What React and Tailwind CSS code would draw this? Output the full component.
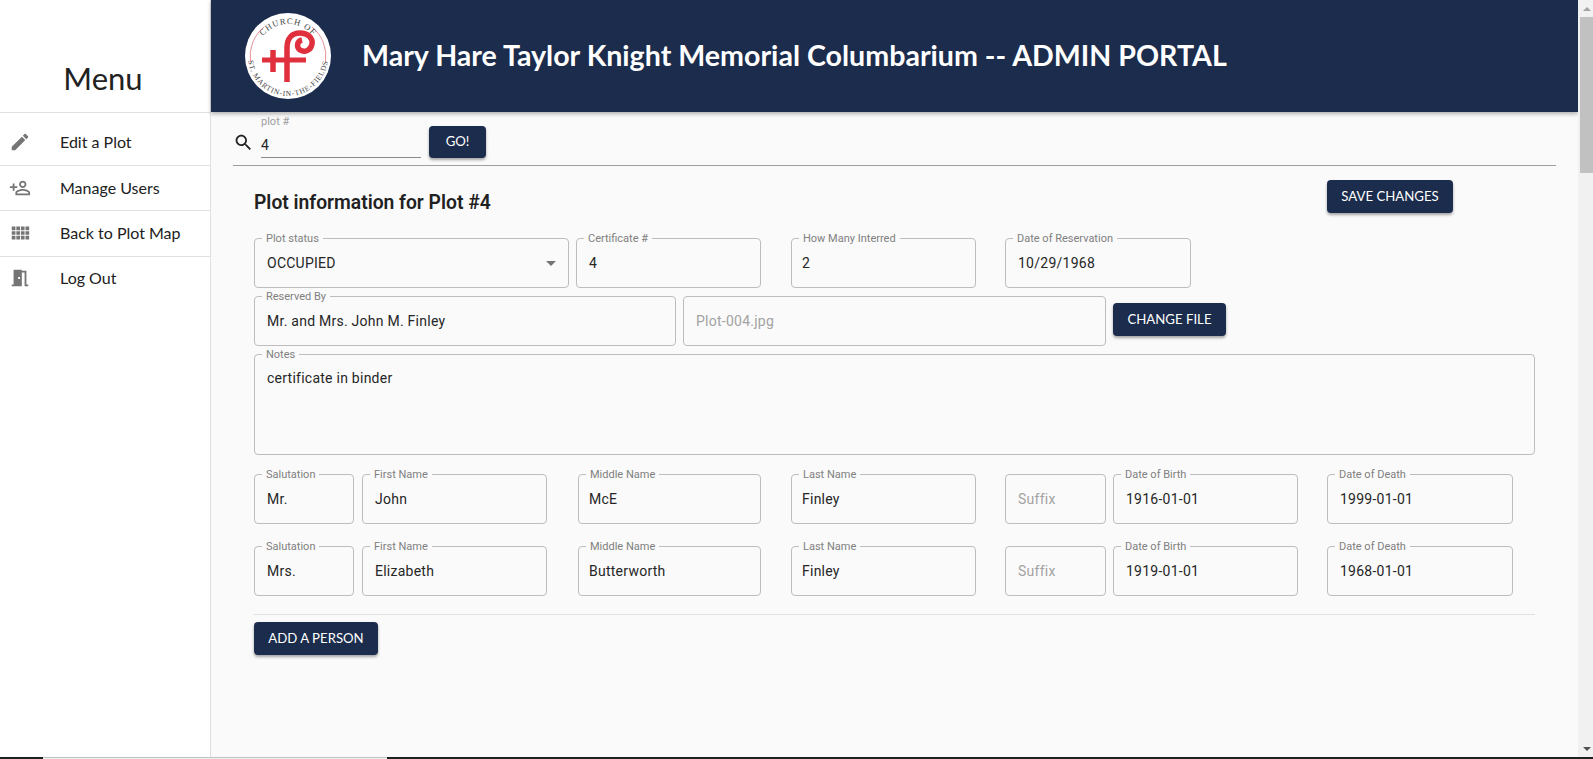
const navy = 'bg-[#1b2c4c]';

function Field({ label, value, placeholder, className = '', pad = 'px-[12px]', select }) {
  return (
    <div className={`relative h-[50px] shrink-0 rounded border border-[#bdbdbd] ${pad} ${className}`}>
      {label && (
        <span className="absolute -top-[6px] left-[7px] bg-[#fafafa] px-[4px] text-[11px] leading-[12px] text-[#808080]">{label}</span>
      )}
      <div className={`flex h-full items-center justify-between text-[14px] tracking-[0.25px] ${placeholder ? 'text-[#a3a3a3]' : 'text-[#262626]'}`}>
        <span>{value || placeholder}</span>
        {select && <span className="h-0 w-0 border-x-[5px] border-t-[5px] border-x-transparent border-t-[#757575]" />}
      </div>
    </div>
  );
}

function Btn({ children, className = '' }) {
  return (
    <button className={`${navy} flex shrink-0 items-center justify-center rounded text-[13.2px] text-white shadow-[0_2px_3px_rgba(0,0,0,0.35)] ${className}`} style={{ fontFamily: 'Lato, sans-serif' }}>
      {children}
    </button>
  );
}

function PersonRow({ salutation, first, middle, last, dob, dod }) {
  return (
    <div className="flex h-[50px]">
      <Field label="Salutation" value={salutation} className="w-[100px]" />
      <Field label="First Name" value={first} className="ml-[8px] w-[185px]" />
      <Field label="Middle Name" value={middle} pad="px-[10px]" className="ml-[31px] w-[183px]" />
      <Field label="Last Name" value={last} pad="px-[10px]" className="ml-[30px] w-[185px]" />
      <Field placeholder="Suffix" className="ml-[29px] w-[101px]" />
      <Field label="Date of Birth" value={dob} className="ml-[7px] w-[185px]" />
      <Field label="Date of Death" value={dod} className="ml-[29px] w-[186px]" />
    </div>
  );
}

function NavItem({ icon, label, className = '' }) {
  return (
    <div className={`flex items-center ${className}`}>
      <span className="mr-[20px] flex w-[40px] justify-center text-[#757575]">{icon}</span>
      <span className="text-[16px] text-[#212121]">{label}</span>
    </div>
  );
}

function Icon({ d }) {
  return (
    <svg width="22" height="22" viewBox="0 0 24 24" fill="currentColor"><path d={d} /></svg>
  );
}

function Logo() {
  return (
    <svg width="88" height="88" viewBox="0 0 88 88">
      <circle cx="44" cy="44" r="43" fill="#fff" />
      <defs>
        <path id="arcTop" d="M12 44 A32 32 0 0 1 76 44" />
        <path id="arcBottom" d="M4 44 A40 40 0 0 0 84 44" />
      </defs>
      <path d="M6.500 50 A38 38 0 0 1 20 15" fill="none" stroke="#e2747c" strokeWidth="0.8" />
      <path d="M68 15 A38 38 0 0 1 81.500 50" fill="none" stroke="#e2747c" strokeWidth="0.8" />
      <text fontSize="8.5" fill="#444" fontFamily="Liberation Serif, serif" letterSpacing="1">
        <textPath href="#arcTop" startOffset="50%" textAnchor="middle">CHURCH OF</textPath>
      </text>
      <text fontSize="7.5" fill="#444" fontFamily="Liberation Serif, serif" letterSpacing="0.8">
        <textPath href="#arcBottom" startOffset="50%" textAnchor="middle">ST. MARTIN-IN-THE-FIELDS</textPath>
      </text>
      <g fill="none" stroke="#e0303e" strokeWidth="5.500">
        <path d="M18 48 H62" strokeWidth="5" />
        <path d="M29 38 V60" />
        <path d="M43 70 V36 C43 26 48 21 56 21 C64 21 69 26 68 32 C67 38 61 41 56 38 C52 35 53 29 58 28" />
      </g>
    </svg>
  );
}

export default function App() {
  return (
    <div className="flex h-[759px] w-[1593px] flex-col overflow-hidden bg-[#fafafa]" style={{ fontFamily: 'Roboto, sans-serif' }}>
      <div className="flex min-h-0 flex-1">
        <aside className="w-[211px] shrink-0 border-r border-[#e0e0e0] bg-white" style={{ fontFamily: 'Lato, sans-serif' }}>
          <div className="flex h-[113px] items-end justify-center border-b border-[#e0e0e0] pb-[14px] pr-[4px] text-[31px] leading-[40px] text-[#212121]">Menu</div>
          <NavItem
            label="Edit a Plot"
            className="h-[53px] border-b border-[#e0e0e0] pt-[5px]"
            icon={<Icon d="M3 17.250V21h3.750L17.810 9.940l-3.750-3.750L3 17.250zM20.710 7.040c.390-.390.390-1.020 0-1.410l-2.340-2.340c-.390-.390-1.020-.390-1.410 0l-1.830 1.830 3.750 3.750 1.830-1.830z" />}
          />
          <NavItem
            label="Manage Users"
            className="h-[45px] border-b border-[#e0e0e0]"
            icon={<Icon d="M15 6c1.100 0 2 .900 2 2s-.900 2-2 2-2-.900-2-2 .900-2 2-2m0 9c2.700 0 5.800 1.290 6 2v1H9v-.990C9.200 16.290 12.300 15 15 15m0-11c-2.210 0-4 1.790-4 4s1.790 4 4 4 4-1.790 4-4-1.790-4-4-4zm0 9c-2.670 0-8 1.340-8 4v3h16v-3c0-2.660-5.330-4-8-4zm-9-3V7H4v3H1v2h3v3h2v-3h3v-2H6z" />}
          />
          <NavItem
            label="Back to Plot Map"
            className="h-[46px] border-b border-[#e0e0e0] pb-[1px]"
            icon={<Icon d="M3 9h4V5H3v4zm0 5h4v-4H3v4zm5 0h4v-4H8v4zm5 0h4v-4h-4v4zM8 9h4V5H8v4zm5-4v4h4V5h-4zm5 9h4v-4h-4v4zM3 19h4v-4H3v4zm5 0h4v-4H8v4zm5 0h4v-4h-4v4zm5 0h4v-4h-4v4zm0-14v4h4V5h-4z" />}
          />
          <NavItem
            label="Log Out"
            className="h-[41px]"
            icon={<Icon d="M14 6v15H3v-2h2V3h9v1h5v15h2v2h-4V6h-3zm-4 5v2h2v-2h-2z" />}
          />
        </aside>

        <main className="min-w-0 flex-1">
          <header className={`${navy} flex h-[112px] items-center pl-[33px] shadow-[0_2px_4px_rgba(0,0,0,0.3)]`}>
            <Logo />
            <h1 className="ml-[30px] pb-[2px] text-[28.6px] font-bold leading-none text-white" style={{ fontFamily: 'Lato, sans-serif' }}>
              Mary Hare Taylor Knight Memorial Columbarium -- ADMIN PORTAL
            </h1>
          </header>

          <div className="mx-[22px] flex h-[54px] items-end border-b border-[#9e9e9e] pb-[7px]">
            <svg width="21" height="21" viewBox="0 0 24 24" fill="#212121" className="mb-[5px]">
              <path d="M15.500 14h-.790l-.280-.270C15.410 12.590 16 11.110 16 9.500 16 5.910 13.090 3 9.500 3S3 5.910 3 9.500 5.910 16 9.500 16c1.610 0 3.090-.590 4.230-1.570l.270.280v.790l5 4.990L20.490 19l-4.990-5zm-6 0C7.010 14 5 11.990 5 9.500S7.010 5 9.500 5 14 7.010 14 9.500 11.990 14 9.500 14z" />
            </svg>
            <div className="ml-[7px] w-[160px] border-b border-[#8a8a8a]">
              <div className="text-[11px] leading-[12px] text-[#9e9e9e]">plot #</div>
              <div className="pt-[8px] pb-[3px] text-[14px] leading-[18px] text-[#262626]">4</div>
            </div>
            <Btn className="ml-[8px] h-[32px] w-[57px]">GO!</Btn>
          </div>

          <section className="px-[43px]">
            <div className="flex h-[72px] items-start justify-between">
              <h2 className="pt-[25px] text-[19.3px] font-semibold leading-[24px] text-[#212121]">Plot information for Plot #4</h2>
              <Btn className="mr-[82px] mt-[14px] h-[33px] w-[126px]">SAVE CHANGES</Btn>
            </div>

            <div className="flex h-[50px]">
              <Field label="Plot status" value="OCCUPIED" select className="w-[315px]" />
              <Field label="Certificate #" value="4" className="ml-[7px] w-[185px]" />
              <Field label="How Many Interred" value="2" pad="px-[10px]" className="ml-[30px] w-[185px]" />
              <Field label="Date of Reservation" value="10/29/1968" className="ml-[29px] w-[186px]" />
            </div>

            <div className="mt-[8px] flex h-[50px]">
              <Field label="Reserved By" value="Mr. and Mrs. John M. Finley" className="w-[422px]" />
              <Field placeholder="Plot-004.jpg" className="ml-[7px] w-[423px]" />
              <Btn className="ml-[7px] mt-[7px] h-[33px] w-[113px]">CHANGE FILE</Btn>
            </div>

            <div className="relative mt-[8px] h-[101px] rounded border border-[#bdbdbd] px-[12px]">
              <span className="absolute -top-[6px] left-[7px] bg-[#fafafa] px-[4px] text-[11px] leading-[12px] text-[#808080]">Notes</span>
              <div className="pt-[13px] text-[14px] leading-[20px] tracking-[0.25px] text-[#262626]">certificate in binder</div>
            </div>

            <div className="mt-[19px] flex flex-col gap-[22px]">
              <PersonRow salutation="Mr." first="John" middle="McE" last="Finley" dob="1916-01-01" dod="1999-01-01" />
              <PersonRow salutation="Mrs." first="Elizabeth" middle="Butterworth" last="Finley" dob="1919-01-01" dod="1968-01-01" />
            </div>

            <div className="mt-[18px] border-t border-[#e0e0e0] pt-[7px]">
              <Btn className="h-[33px] w-[124px]">ADD A PERSON</Btn>
            </div>
          </section>
        </main>

        <div className="flex w-[15px] shrink-0 flex-col bg-[#f1f1f1]">
          <div className="flex h-[17px] items-center justify-center pl-[2px]">
            <span className="h-0 w-0 border-x-[4px] border-b-[4px] border-x-transparent border-b-[#a3a3a3]" />
          </div>
          <div className="ml-[2px] h-[156px] bg-[#c1c1c1]" />
          <div className="flex-1" />
          <div className="flex h-[17px] items-center justify-center pl-[2px]">
            <span className="h-0 w-0 border-x-[4px] border-t-[4px] border-x-transparent border-t-[#505050]" />
          </div>
        </div>
      </div>

      <div className="flex h-[2px] shrink-0 bg-[#202020]">
        <div className="ml-[43px] w-[344px] border-t border-[#c4c4c4] bg-[#f0f0f0]" />
      </div>
    </div>
  );
}
